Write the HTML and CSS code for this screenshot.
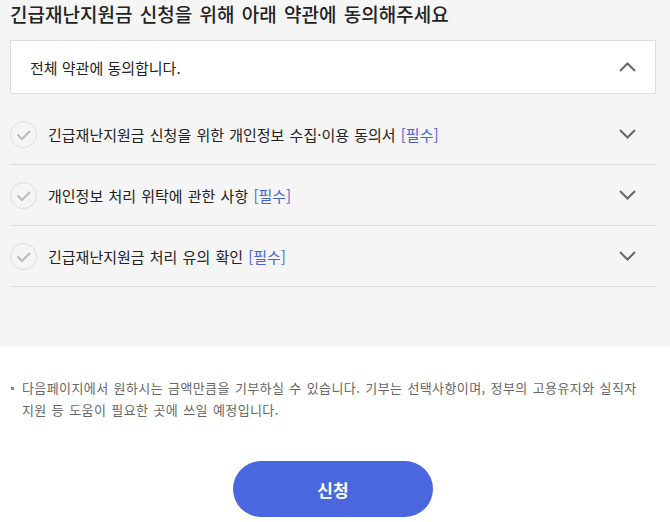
FILE: index.html
```html
<!DOCTYPE html>
<html lang="ko">
<head>
    <meta charset="UTF-8">
    <meta name="viewport" content="width=device-width, initial-scale=1.0">
    <title>긴급재난지원금 신청</title>
    <link rel="stylesheet" href="styles.css">
</head>
<body>
<div class="agree-area">
    <h2 class="agree-title">긴급재난지원금 신청을 위해 아래 약관에 동의해주세요</h2>

    <div class="agree-all">
        <span>전체 약관에 동의합니다.</span>
        <svg class="chevron" width="17" height="10" viewBox="0 0 17 10">
            <polyline points="1,9 8.5,1.5 16,9" />
        </svg>
    </div>

    <ul class="terms">
        <li class="term">
            <span class="check">
                <svg width="27" height="27" viewBox="0 0 27 27"><polyline points="7.5,13.5 12,18 20,10" /></svg>
            </span>
            <span class="term-text">긴급재난지원금 신청을 위한 개인정보 수집·이용 동의서 <em>[필수]</em></span>
            <svg class="chevron" width="17" height="10" viewBox="0 0 17 10">
                <polyline points="1,1 8.5,8.5 16,1" />
            </svg>
        </li>
        <li class="term">
            <span class="check">
                <svg width="27" height="27" viewBox="0 0 27 27"><polyline points="7.5,13.5 12,18 20,10" /></svg>
            </span>
            <span class="term-text">개인정보 처리 위탁에 관한 사항 <em>[필수]</em></span>
            <svg class="chevron" width="17" height="10" viewBox="0 0 17 10">
                <polyline points="1,1 8.5,8.5 16,1" />
            </svg>
        </li>
        <li class="term">
            <span class="check">
                <svg width="27" height="27" viewBox="0 0 27 27"><polyline points="7.5,13.5 12,18 20,10" /></svg>
            </span>
            <span class="term-text">긴급재난지원금 처리 유의 확인 <em>[필수]</em></span>
            <svg class="chevron" width="17" height="10" viewBox="0 0 17 10">
                <polyline points="1,1 8.5,8.5 16,1" />
            </svg>
        </li>
    </ul>
</div>

<div class="bottom">
    <p class="note">다음페이지에서 원하시는 금액만큼을 기부하실 수 있습니다. 기부는 선택사항이며, 정부의 고용유지와 실직자 지원 등 도움이 필요한 곳에 쓰일 예정입니다.</p>
    <button class="btn-submit">신청</button>
</div>
</body>
</html>
```

FILE: styles.css
```css
body {
    margin: 0;
    font-family: "Noto Sans CJK KR", "Noto Sans", sans-serif;
    background-color: #fff;
    color: #333;
    word-break: keep-all;
}

.agree-area {
    background-color: #f5f5f5;
    padding: 0 14px 60px 10px;
}

.agree-title {
    margin: 0 0 12px 0;
    font-size: 19px;
    font-weight: 500;
    line-height: 28px;
    word-spacing: 2px;
    color: #222;
}

.agree-all {
    display: flex;
    align-items: center;
    justify-content: space-between;
    height: 52px;
    padding: 0 19px 0 19px;
    background-color: #fff;
    border: 1px solid #ddd;
    font-size: 15px;
    color: #222;
}

.chevron {
    fill: none;
    stroke: #666;
    stroke-width: 2;
}

.terms {
    list-style: none;
    margin: 10px 0 0 0;
    padding: 0;
}

.term {
    display: flex;
    align-items: center;
    height: 60px;
    border-bottom: 1px solid #ddd;
    font-size: 15px;
    word-spacing: 1px;
    color: #222;
}

.term .chevron {
    margin-left: auto;
    margin-right: 20px;
}

.check {
    display: flex;
    width: 25px;
    height: 25px;
    border: 1px solid #ddd;
    border-radius: 50%;
    margin-right: 11px;
    overflow: hidden;
}

.check svg {
    margin: -1px;
    fill: none;
    stroke: #bbb;
    stroke-width: 2;
}

.term-text em {
    font-style: normal;
    color: #4a64d4;
}

.bottom {
    padding: 30px 14px 4px 10px;
}

.note {
    position: relative;
    margin: 0 0 40px 0;
    padding-left: 12px;
    font-size: 13px;
    line-height: 22px;
    letter-spacing: 0.4px;
    word-spacing: 1px;
    color: #666;
}

.note::before {
    content: "";
    position: absolute;
    left: 1px;
    top: 10px;
    width: 3px;
    height: 3px;
    background-color: #888;
}

.btn-submit {
    display: block;
    margin: 0 auto;
    width: 200px;
    height: 56px;
    border: none;
    border-radius: 28px;
    background-color: #4a67e0;
    color: #fff;
    font-family: "Noto Sans CJK KR", sans-serif;
    font-size: 17px;
    font-weight: 700;
    cursor: pointer;
}
```
